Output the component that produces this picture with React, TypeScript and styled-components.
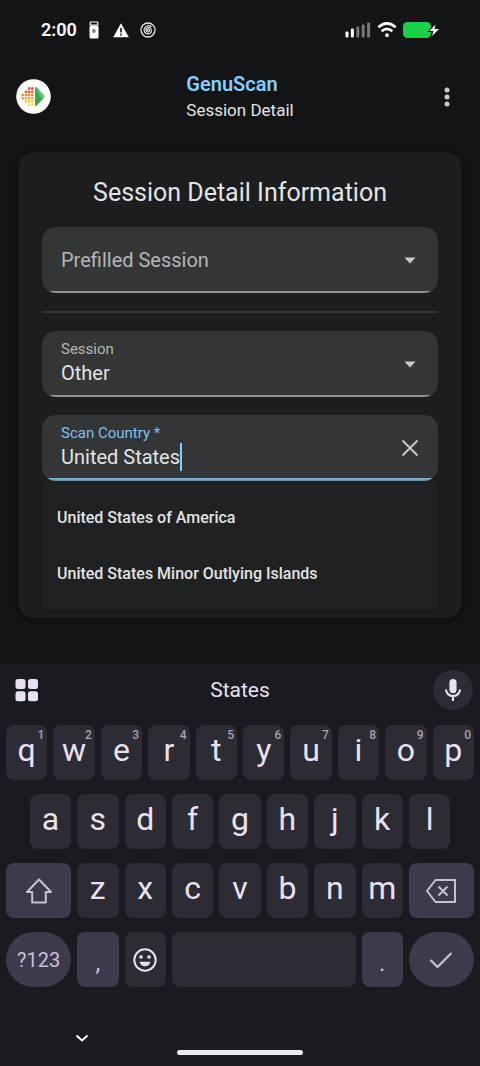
import React, { useState } from 'react';
import styled, { createGlobalStyle, css } from 'styled-components';

const GlobalStyle = createGlobalStyle`
  *, *::before, *::after { box-sizing: border-box; }
  body { margin: 0; background: #131416; }
  body, button, input, select { font-family: Roboto, "Liberation Sans", sans-serif; }
  button { border: 0; padding: 0; background: none; color: inherit; cursor: pointer; }
  svg { display: block; flex: none; }
`;

const Screen = styled.div`
  display: flex;
  flex-direction: column;
  min-height: 100vh;
  color: #e3e3e4;
`;

const StatusBar = styled.div`
  display: flex;
  align-items: center;
  justify-content: space-between;
  height: 60px;
  padding: 0 40px 0 41px;
  color: #fff;
`;

const StatusGroup = styled.div<{ $gap: number }>`
  display: flex;
  align-items: center;
  gap: ${({ $gap }) => $gap}px;
`;

const Clock = styled.time`
  font-size: 18px;
  line-height: 20px;
  font-weight: 600;
`;

const AppBar = styled.header`
  display: grid;
  grid-template-columns: 1fr auto 1fr;
  align-items: center;
  height: 73px;
  padding: 0 16px;
`;

const AppTitle = styled.div`
  display: flex;
  flex-direction: column;
`;

const AppName = styled.strong`
  font-size: 20px;
  line-height: 26px;
  font-weight: 600;
  color: #87cbff;
`;

const PageName = styled.span`
  font-size: 17px;
  line-height: 26px;
`;

const MenuButton = styled.button`
  justify-self: end;
  width: 34px;
  height: 34px;
  display: grid;
  place-items: center;
  color: #c9cacc;
`;

const Main = styled.main`
  flex: 1;
  padding: 19px 19px 46px;
`;

const Card = styled.form`
  display: flex;
  flex-direction: column;
  gap: 18px;
  padding: 24px 23px 8px;
  border-radius: 14px;
  background: #1c1d1e;
  box-shadow: 0 1px 6px #0c0d0e;
`;

const CardTitle = styled.h1`
  margin: 0;
  font-size: 25px;
  line-height: 33px;
  font-weight: 400;
  text-align: center;
`;

const Divider = styled.hr`
  width: 100%;
  margin: 0;
  border: 0;
  border-top: 2px solid #343536;
`;

const Field = styled.div<{ $active?: boolean }>`
  display: flex;
  align-items: center;
  height: 66px;
  padding: 0 16px 0 19px;
  border-radius: 14px;
  color: #c6c6c8;
  background: ${({ $active }) =>
    $active
      ? 'linear-gradient(#7abbe6, #7abbe6) bottom / 100% 3px no-repeat #343536'
      : 'linear-gradient(#8e9092, #8e9092) bottom / 100% 2px no-repeat #343536'};
`;

const FieldText = styled.div`
  flex: 1;
  min-width: 0;
  display: flex;
  flex-direction: column;
  gap: 4px;

  &:has(label) {
    padding-bottom: 2px;
  }
`;

const FieldLabel = styled.label<{ $active?: boolean }>`
  font-size: 15px;
  line-height: 16px;
  color: ${({ $active }) => ($active ? '#7fc0ee' : '#b4b5b7')};
`;

const controlText = css`
  height: 24px;
  padding: 0;
  border: 0;
  outline: 0;
  background: transparent;
  font-size: 20px;
  line-height: 24px;
`;

const Select = styled.select<{ $muted?: boolean }>`
  ${controlText}
  appearance: none;
  width: 100%;
  color: ${({ $muted }) => ($muted ? '#b4b5b7' : '#e3e3e4')};
`;

const InputLine = styled.div`
  display: flex;
  align-items: center;
  height: 24px;
`;

const Input = styled.input`
  ${controlText}
  field-sizing: content;
  min-width: 1px;
  color: #e3e3e4;
  caret-color: transparent;
`;

const Caret = styled.span`
  width: 2px;
  height: 28px;
  background: #87cbff;
`;

const Suggestions = styled.ul`
  margin: 0;
  padding: 9px 0 8px;
  list-style: none;
  border-radius: 4px;
  background: #1f2122;
  box-shadow: 0 1px 4px #151617;
`;

const Suggestion = styled.button`
  width: 100%;
  height: 56px;
  padding: 0 15px;
  text-align: left;
  font-size: 16px;
  line-height: 24px;
  font-weight: 500;
`;

const Keyboard = styled.section`
  background: #1b1a1f;
  color: #e9e1f1;
`;

const Strip = styled.div`
  display: grid;
  grid-template-columns: 1fr auto 1fr;
  align-items: center;
  height: 52px;
  padding: 0 7px;
`;

const ToolsButton = styled.button`
  display: grid;
  place-items: center;
  width: 40px;
  height: 40px;
`;

const StripWord = styled.button`
  font-size: 21px;
  line-height: 28px;
`;

const MicButton = styled.button`
  justify-self: end;
  display: grid;
  place-items: center;
  width: 40px;
  height: 40px;
  border-radius: 50%;
  background: #2d2b33;
`;

const Keys = styled.div`
  display: grid;
  grid-template-columns: repeat(20, minmax(0, 1fr));
  gap: 14px 6px;
  padding: 9px 6px 0;
`;

type KeyKind = 'letter' | 'action' | 'round';

const Key = styled.button<{ $span?: number; $kind?: KeyKind; $start?: number }>`
  position: relative;
  display: flex;
  align-items: center;
  justify-content: center;
  grid-column: ${({ $start }) => ($start ? `${$start} / ` : '')} span ${({ $span = 2 }) => $span};
  height: 55px;
  border-radius: ${({ $kind }) => ($kind === 'round' ? '28px' : '8px')};
  background: ${({ $kind = 'letter' }) => ($kind === 'letter' ? '#2d2b33' : '#3e394b')};
  color: ${({ $kind = 'letter' }) => ($kind === 'letter' ? '#e9e1f1' : '#c8c0d8')};
`;

const Letter = styled.span`
  padding-bottom: 6px;
  font-size: 32px;
  line-height: 36px;
`;

const Hint = styled.sup`
  position: absolute;
  top: 3px;
  right: 3px;
  font-size: 12px;
  line-height: 14px;
  font-weight: 500;
  color: #a8a2b0;
`;

const SymbolLabel = styled.span`
  font-size: 20px;
  line-height: 28px;
`;

const Punctuation = styled.span`
  padding-top: 6px;
  font-size: 24px;
  line-height: 28px;
`;

const NavBar = styled.nav`
  display: grid;
  grid-template-columns: 1fr 126px 1fr;
  align-items: end;
  height: 79px;
  padding: 39px 0 11px;
`;

const HideButton = styled.button`
  align-self: start;
  width: 24px;
  height: 24px;
  margin-left: 70px;
  color: #fff;
`;

const HomeHandle = styled.div`
  height: 5px;
  border-radius: 3px;
  background: #ebebeb;
`;

const DeviceIcon = () => (
  <svg width="10" height="18" viewBox="0 0 10 18">
    <path d="M1.200 1.800Q1.200 1 2 1h6q.8 0 .8.800V4H1.200z" fill="none" stroke="#fff" strokeWidth="1.200" />
    <rect x="0.5" y="4.500" width="9" height="13" rx="1.500" fill="#fff" />
    <circle cx="5" cy="10.200" r="1.200" fill="none" stroke="#444" />
    <path d="M4 9.800Q4 8 5.600 7.800" fill="none" stroke="#444" strokeWidth=".8" />
  </svg>
);

const WarningIcon = () => (
  <svg width="18" height="15" viewBox="0 0 18 15">
    <path d="M10 .3 17.800 14.300H2.200z" fill="#fff" />
    <path d="M10 5v4.500M10 10.800v1.700" stroke="#131416" strokeWidth="1.600" />
  </svg>
);

const SpiralIcon = () => (
  <svg width="16" height="16" viewBox="1 0 16 16" fill="none" stroke="#e4e4e4" overflow="visible">
    <circle cx="8" cy="8" r="7" strokeWidth="1.300" />
    <path
      d="M8 8.300c-.8.2-1-.9-.2-1.200 1.300-.4 2.200 1.200 1.300 2.200-1.300 1.400-3.600.2-3.300-1.700.3-2.300 3.300-3 4.800-1.200 1.800 2.200.4 5.400-2.400 5.500-3.200.1-5-3.100-3.800-5.700C5.700 3.500 9.300 2.800 11.500 4.800"
      strokeWidth="1.200"
    />
  </svg>
);

const SignalIcon = () => (
  <svg width="26" height="16" viewBox="0 0 26 16">
    {[6, 9, 11, 13, 15].map((h, i) => (
      <rect key={h} x={0.5 + i * 5.4} y={15.500 - h} width="3" height={h} rx="1" fill={i < 2 ? '#fff' : '#77787a'} />
    ))}
  </svg>
);

const WifiIcon = () => (
  <svg width="20" height="16" viewBox="0 0 20 16" fill="none" stroke="#fff" strokeWidth="2.600">
    <path d="M1.300 5.300Q10-2.500 18.700 5.300M4.600 9.200Q10 4.600 15.400 9.200" />
    <circle cx="10" cy="13.200" r="1.900" fill="#fff" stroke="none" />
  </svg>
);

const BatteryIcon = () => (
  <svg width="37" height="16" viewBox="0 0 37 16">
    <rect width="28" height="16" rx="4.500" fill="#1bcf49" />
    <path d="M32.500 2.500 26.500 9h4l-1.500 5 7-7h-4.500z" fill="#fff" stroke="#131416" strokeWidth="1.800" paintOrder="stroke" />
  </svg>
);

const dotColumns = [
  { x: 5.5, rows: [2, 3] },
  { x: 8.7, rows: [1, 2, 3, 4] },
  { x: 11.9, rows: [0, 1, 2, 3, 4, 5] },
  { x: 15.1, rows: [0, 1, 2, 3, 4, 5] },
];
const dotColors = ['#e8452c', '#e9662f', '#ef8b35', '#f3a83a', '#f8cb42', '#fbe04a'];

const Logo = () => (
  <svg width="35" height="35" viewBox="0 0 35 35" role="img" aria-label="GenuScan logo">
    <defs>
      <linearGradient id="leaf" x1="0" y1="1" x2="1" y2="0">
        <stop offset=".4" stopColor="#2fa84a" />
        <stop offset="1" stopColor="#c9e8cd" />
      </linearGradient>
    </defs>
    <circle cx="17.500" cy="17.500" r="17.300" fill="#fff" />
    {dotColumns.map(({ x, rows }) =>
      rows.map((r) => (
        <rect key={`${x}-${r}`} x={x} y={8.300 + r * 3.200} width="2.500" height="2.500" rx=".5" fill={dotColors[r]} />
      )),
    )}
    <path d="M19 8.500Q20 7.500 21.500 9L28.500 16.500Q29.200 17.500 28.500 18.500L21 26.200Q19.800 27.500 19 26.500z" fill="url(#leaf)" />
  </svg>
);

const MoreIcon = () => (
  <svg width="6" height="20" viewBox="0 0 6 20" fill="currentColor">
    <circle cx="3" cy="3" r="2.500" />
    <circle cx="3" cy="10" r="2.500" />
    <circle cx="3" cy="17" r="2.500" />
  </svg>
);

const DropIcon = () => (
  <svg width="24" height="24" viewBox="0 0 24 24">
    <path d="M6.300 9.500h11.400L12 15.500z" fill="currentColor" />
  </svg>
);

const CloseIcon = () => (
  <svg width="24" height="24" viewBox="0 0 24 24">
    <path d="m4.500 4.500 15 15m0-15-15 15" stroke="currentColor" strokeWidth="2" />
  </svg>
);

const GridIcon = () => (
  <svg width="24" height="24" viewBox="0 0 24 24" fill="currentColor">
    <rect x=".5" y="1" width="10" height="10" rx="2.500" />
    <rect x="13" y="1" width="10" height="10" rx="2.500" />
    <rect x=".5" y="13.300" width="10" height="10" rx="2.500" />
    <rect x="13" y="13.300" width="10" height="10" rx="2.500" />
  </svg>
);

const MicIcon = () => (
  <svg width="18" height="24" viewBox="0 0 18 24">
    <rect x="5.400" y="1" width="7.200" height="14" rx="3.600" fill="currentColor" />
    <path d="M2 11.500a7 6.500 0 0 0 14 0M9 18v5" fill="none" stroke="currentColor" strokeWidth="2.200" />
  </svg>
);

const ShiftIcon = () => (
  <svg width="28" height="28" viewBox="0 0 28 28" fill="none" stroke="currentColor" strokeWidth="2" strokeLinejoin="round">
    <path d="M14 2.500 26 15h-5.200v10.500H7.200V15H2z" />
  </svg>
);

const BackspaceIcon = () => (
  <svg width="32" height="26" viewBox="0 0 32 26" fill="none" stroke="currentColor" strokeWidth="2" strokeLinejoin="round">
    <path d="M10.500 2H30v22H10.500L2 13zM13.500 8.500l9 9m0-9-9 9" />
  </svg>
);

const SmileIcon = () => (
  <svg width="24" height="24" viewBox="0 0 24 24">
    <circle cx="12" cy="12" r="10.700" fill="none" stroke="currentColor" strokeWidth="2" />
    <circle cx="8" cy="9" r="1.800" fill="currentColor" />
    <circle cx="16" cy="9" r="1.800" fill="currentColor" />
    <path d="M6.500 13.700h11Q16 18.300 12 18.300T6.500 13.700z" fill="currentColor" />
  </svg>
);

const CheckIcon = () => (
  <svg width="24" height="18" viewBox="0 0 24 18" fill="none" stroke="currentColor" strokeWidth="2.200">
    <path d="m1.500 9 7 7L22.500 2" />
  </svg>
);

const ChevronIcon = () => (
  <svg width="24" height="24" viewBox="0 0 24 24" fill="none" stroke="currentColor" strokeWidth="2">
    <path d="m6.500 9.500 5.500 5 5.500-5" />
  </svg>
);

const countries = ['United States of America', 'United States Minor Outlying Islands'];

export default function App() {
  const [country, setCountry] = useState('United States');

  return (
    <Screen>
      <GlobalStyle />
      <StatusBar>
        <StatusGroup $gap={12}>
          <Clock>2:00</Clock>
          <DeviceIcon />
          <WarningIcon />
          <SpiralIcon />
        </StatusGroup>
        <StatusGroup $gap={6}>
          <SignalIcon />
          <WifiIcon />
          <BatteryIcon />
        </StatusGroup>
      </StatusBar>

      <AppBar>
        <Logo />
        <AppTitle>
          <AppName>GenuScan</AppName>
          <PageName>Session Detail</PageName>
        </AppTitle>
        <MenuButton type="button" aria-label="More options">
          <MoreIcon />
        </MenuButton>
      </AppBar>

      <Main>
        <Card onSubmit={(e) => e.preventDefault()}>
          <CardTitle>Session Detail Information</CardTitle>
          <Field>
            <FieldText>
              <Select $muted aria-label="Prefilled Session">
                <option>Prefilled Session</option>
              </Select>
            </FieldText>
            <DropIcon />
          </Field>
          <Divider />
          <Field>
            <FieldText>
              <FieldLabel htmlFor="session">Session</FieldLabel>
              <Select id="session">
                <option>Other</option>
              </Select>
            </FieldText>
            <DropIcon />
          </Field>
          <div>
            <Field $active>
              <FieldText>
                <FieldLabel $active htmlFor="country">Scan Country *</FieldLabel>
                <InputLine>
                  <Input id="country" required value={country} onChange={(e) => setCountry(e.target.value)} />
                  <Caret />
                </InputLine>
              </FieldText>
              <button type="button" aria-label="Clear" onClick={() => setCountry('')}>
                <CloseIcon />
              </button>
            </Field>
            <Suggestions>
              {countries.map((name) => (
                <li key={name}>
                  <Suggestion type="button" onClick={() => setCountry(name)}>{name}</Suggestion>
                </li>
              ))}
            </Suggestions>
          </div>
        </Card>
      </Main>

      <Keyboard aria-label="Keyboard">
        <Strip>
          <ToolsButton type="button" aria-label="Keyboard tools">
            <GridIcon />
          </ToolsButton>
          <StripWord type="button">States</StripWord>
          <MicButton type="button" aria-label="Voice input">
            <MicIcon />
          </MicButton>
        </Strip>
        <Keys>
          {[...'qwertyuiop'].map((c, i) => (
            <Key key={c}>
              <Letter>{c}</Letter>
              <Hint>{(i + 1) % 10}</Hint>
            </Key>
          ))}
          {[...'asdfghjkl'].map((c, i) => (
            <Key key={c} $start={i === 0 ? 2 : undefined}>
              <Letter>{c}</Letter>
            </Key>
          ))}
          <Key $start={1} $span={3} $kind="action" aria-label="Shift">
            <ShiftIcon />
          </Key>
          {[...'zxcvbnm'].map((c) => (
            <Key key={c}>
              <Letter>{c}</Letter>
            </Key>
          ))}
          <Key $span={3} $kind="action" aria-label="Backspace">
            <BackspaceIcon />
          </Key>
          <Key $span={3} $kind="round">
            <SymbolLabel>?123</SymbolLabel>
          </Key>
          <Key $kind="action">
            <Punctuation>,</Punctuation>
          </Key>
          <Key aria-label="Emoji">
            <SmileIcon />
          </Key>
          <Key $span={8} aria-label="Space" />
          <Key $kind="action">
            <Punctuation>.</Punctuation>
          </Key>
          <Key $span={3} $kind="round" aria-label="Done">
            <CheckIcon />
          </Key>
        </Keys>
        <NavBar>
          <HideButton type="button" aria-label="Hide keyboard">
            <ChevronIcon />
          </HideButton>
          <HomeHandle />
        </NavBar>
      </Keyboard>
    </Screen>
  );
}
